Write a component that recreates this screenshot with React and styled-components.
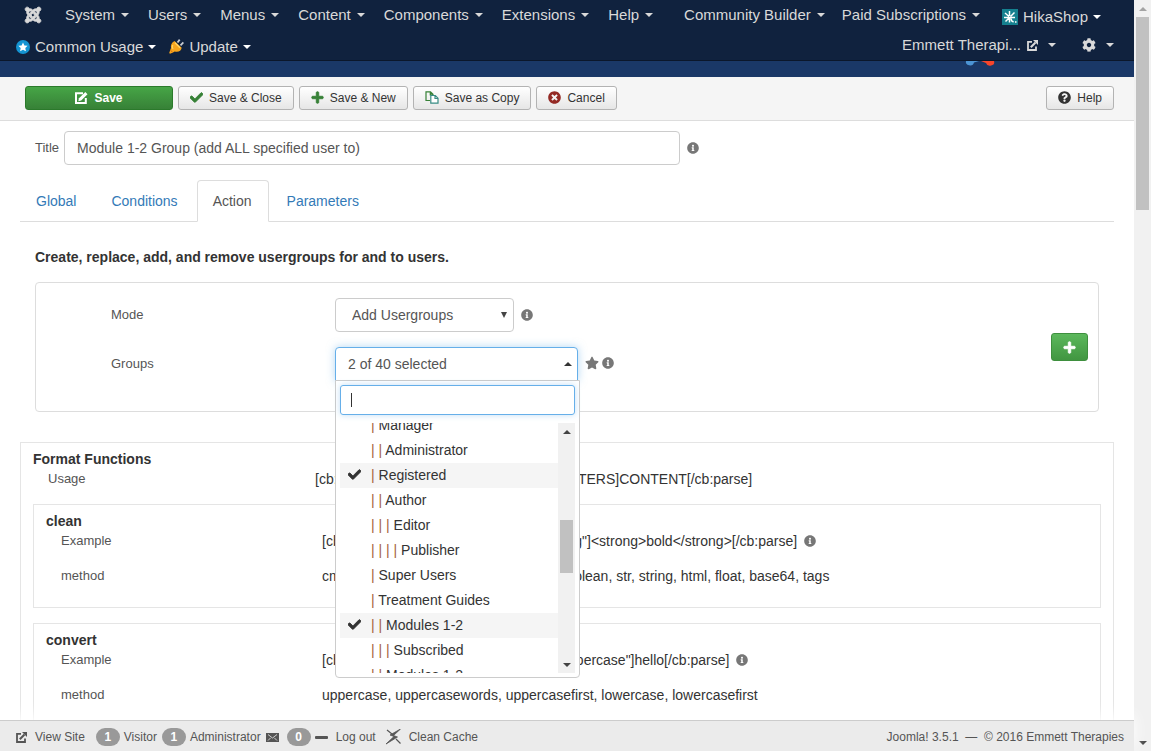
import { useLayoutEffect, useRef } from 'react'
import styled, { createGlobalStyle, css } from 'styled-components'
import { FaCheck, FaCog, FaInfoCircle, FaJoomla, FaPlus, FaQuestionCircle, FaStar, FaTimesCircle } from 'react-icons/fa'

const GlobalStyle = createGlobalStyle`
  * {
    box-sizing: border-box;
  }
  body {
    margin: 0;
    overflow: hidden;
    background: #fff;
    color: #333;
    font-family: "Liberation Sans", Arial, sans-serif;
    font-size: 14px;
  }
  button, input, select {
    font-family: inherit;
  }
  a {
    text-decoration: none;
  }
  svg {
    flex: none;
    display: block;
  }
`;

const Window = styled.div`
  display: flex;
  height: 100vh;
`;

const Page = styled.div`
  flex: 1;
  min-width: 0;
  display: flex;
  flex-direction: column;
`;

const Navbar = styled.nav`
  flex: none;
  background: #10223e;
  border-bottom: 1px solid #0b172b;
`;

const NavRow = styled.div`
  display: flex;
  align-items: center;
  height: 30px;
  padding: 0 20px 0 24px;
  white-space: nowrap;
`;

const NavRowBottom = styled(NavRow)`
  padding-top: 3px;
  padding-left: 16px;
  gap: 13px;
`;

const NavLink = styled.a`
  display: flex;
  align-items: center;
  gap: ${props => props.$tight ? '5px' : '6px'};
  font-size: 15px;
  line-height: 20px;
  color: #d9d9d9;
`;

const JoomlaLink = styled(NavLink)`
  margin-right: 23px;
`;

const MenuList = styled.div`
  display: flex;
  gap: 19px;
`;

const AddonMenus = styled(MenuList)`
  gap: 17px;
  margin-left: 31px;
`;

const HikaLink = styled(NavLink)`
  margin-left: 22px;
  padding-top: 3px;
`;

const Caret = styled.span`
  width: 8px;
  border: 4px solid transparent;
  border-bottom: 0;
  border-top-color: ${props => props.$bright ? '#fff' : '#d9d9d9'};
  ${props => props.$up && css`
    border-top: 0;
    border-bottom: 4px solid #333;
  `}
`;

const SiteLinks = styled.div`
  display: flex;
  gap: 26px;
  margin-left: auto;
  padding-bottom: 3px;
  ${Caret} {
    margin-left: 4px;
  }
`;

const Header = styled.header`
  flex: none;
  display: flex;
  justify-content: flex-end;
  height: 16px;
  padding-right: 138px;
  background: #1a3867;
`;

const Toolbar = styled.div`
  flex: none;
  display: flex;
  align-items: center;
  gap: 5px;
  height: 44px;
  padding: 0 20px 2px 25px;
  background: #f5f5f5;
  border-bottom: 1px solid #ddd;
`;

const ToolButton = styled.button`
  display: flex;
  align-items: center;
  gap: 6px;
  height: 24px;
  padding: 0 11px;
  font-size: 12px;
  color: #333;
  background: linear-gradient(#fff, #e6e6e6);
  border: 1px solid #b3b3b3;
  border-radius: 3px;
  white-space: nowrap;
`;

const SaveButton = styled(ToolButton)`
  width: 148px;
  justify-content: center;
  font-weight: bold;
  color: #fff;
  background: linear-gradient(#46a546, #378137);
  border-color: #2b7a2b;
`;

const HelpButton = styled(ToolButton)`
  margin-left: auto;
`;

const Content = styled.main`
  flex: 1;
  min-height: 0;
  overflow: hidden;
  padding: 10px 20px 0;
`;

const TitleRow = styled.div`
  display: flex;
  align-items: center;
  gap: 5px;
  padding-left: 15px;
  color: #777;
  svg {
    margin-left: 2px;
  }
`;

const Label = styled.label`
  font-size: 13px;
  line-height: 20px;
  color: #555;
`;

const TitleInput = styled.input`
  width: 616px;
  height: 34px;
  padding: 0 12px;
  font-size: 14px;
  color: #555;
  border: 1px solid #ccc;
  border-radius: 4px;
`;

const Tabs = styled.div`
  display: flex;
  gap: 2px;
  margin-top: 15px;
  border-bottom: 1px solid #ddd;
`;

const Tab = styled.a`
  padding: 10px 16px 10px 15px;
  margin-bottom: -1px;
  line-height: 20px;
  border: 1px solid transparent;
  border-radius: 4px 4px 0 0;
  color: #337ab7;
  ${props => props.$active && css`
    color: #555;
    background: #fff;
    border-color: #ddd;
    border-bottom-color: #fff;
  `}
`;

const Intro = styled.p`
  margin: 25px 15px 15px;
  line-height: 20px;
  font-weight: bold;
`;

const Panel = styled.section`
  display: flex;
  align-items: center;
  justify-content: space-between;
  height: 130px;
  margin: 0 15px;
  padding: 0 10px 0 75px;
  border: 1px solid #ddd;
  border-radius: 4px;
`;

const Fields = styled.div`
  display: flex;
  flex-direction: column;
  gap: 15px;
  padding-bottom: 15px;
`;

const FieldRow = styled.div`
  display: grid;
  grid-template-columns: 224px auto;
  align-items: center;
`;

const Controls = styled.div`
  display: flex;
  align-items: center;
  gap: 7px;
  padding-right: 1px;
  color: #777;
`;

const IconPair = styled.span`
  display: flex;
  align-items: center;
  gap: 3px;
  padding-bottom: 2px;
`;

const SelectBox = styled.div`
  position: relative;
  color: #555;
  &::after {
    content: '';
    position: absolute;
    top: 14px;
    right: 7px;
    border: 3px solid transparent;
    border-top: 6px solid #444;
    border-bottom: 0;
    pointer-events: none;
  }
`;

const Select = styled.select`
  appearance: none;
  width: 179px;
  height: 34px;
  padding: 0 16px;
  font-size: 14px;
  color: #555;
  background: #fff;
  border: 1px solid #ccc;
  border-radius: 4px;
`;

const Dropdown = styled.div`
  position: relative;
`;

const DropdownButton = styled.button`
  display: flex;
  align-items: center;
  justify-content: space-between;
  width: 243px;
  height: 34px;
  padding: 0 5px 0 12px;
  font-size: 14px;
  color: #555;
  background: #fff;
  border: 1px solid #66afe9;
  border-radius: 4px 4px 0 0;
  box-shadow: 0 0 8px rgba(102, 175, 233, 0.5);
`;

const Menu = styled.div`
  position: absolute;
  z-index: 5;
  top: 33px;
  left: 0;
  width: 245px;
  padding: 4px;
  background: #fff;
  border: 1px solid #ccc;
  border-radius: 0 0 4px 4px;
`;

const Search = styled.div`
  display: flex;
  align-items: center;
  height: 30px;
  padding: 0 10px;
  border: 1px solid #66afe9;
  border-radius: 3px;
  box-shadow: 0 0 6px rgba(102, 175, 233, 0.4);
  input {
    flex: 1;
    min-width: 0;
    border: 0;
    outline: 0;
    background: none;
    font-size: 14px;
  }
`;

const TextCursor = styled.span`
  width: 1px;
  height: 14px;
  background: #333;
`;

const ListArea = styled.div`
  display: flex;
  height: 250px;
  margin-top: 8px;
`;

const Options = styled.ul`
  flex: 1;
  margin: 0;
  padding: 0;
  overflow: hidden;
  list-style: none;
`;

const Option = styled.li`
  display: grid;
  grid-template-columns: 23px auto;
  align-items: center;
  height: 25px;
  padding: 0 0 2px 8px;
  color: #333;
  background: ${props => props.$selected ? '#f5f5f5' : '#fff'};
`;

const OptionName = styled.span`
  grid-column: 2;
`;

const Bars = styled.span`
  color: #a4623a;
`;

const Track = styled.div`
  flex: none;
  display: flex;
  flex-direction: column;
  align-items: center;
  width: 17px;
  background: #f1f1f1;
`;

const TrackArrow = styled.span`
  flex: none;
  display: flex;
  align-items: center;
  justify-content: center;
  height: 17px;
`;

const TrackCaret = styled(Caret)`
  ${props => props.$up && css`border-bottom-color: ${props.$faded ? '#a3a3a3' : '#444'};`}
  ${props => !props.$up && css`border-top-color: #444;`}
`;

const Thumb = styled.div`
  width: 13px;
  height: ${props => props.$size};
  margin-top: ${props => props.$from || 0};
  margin-bottom: auto;
  background: #c1c1c1;
`;

const AddButton = styled.button`
  display: flex;
  align-items: center;
  justify-content: center;
  width: 37px;
  height: 28px;
  padding: 0;
  color: #fff;
  background: linear-gradient(#5cb85c, #419641);
  border: 1px solid #3e8f3e;
  border-radius: 3px;
`;

const Fieldset = styled.section`
  border: 1px solid #e5e5e5;
  padding: 6px 12px 0;
`;

const FormatBox = styled(Fieldset)`
  margin-top: 30px;
`;

const FunctionBox = styled(Fieldset)`
  height: 104px;
  margin-bottom: 15px;
`;

const BoxTitle = styled.h4`
  margin: 0;
  font-size: 14px;
  line-height: 20px;
`;

const Row = styled.div`
  display: grid;
  grid-template-columns: ${props => props.$wide ? '267px auto' : '261px auto'};
  padding-left: 15px;
  margin-bottom: 15px;
  line-height: 20px;
`;

const RowValue = styled.div`
  display: flex;
  align-items: center;
  gap: 7px;
  color: #333;
  white-space: nowrap;
  svg {
    color: #777;
  }
`;

const StatusBar = styled.footer`
  flex: none;
  position: relative;
  z-index: 1;
  display: flex;
  align-items: center;
  height: 31px;
  padding: 2px 10px 0 16px;
  font-size: 12px;
  color: #555;
  background: #ebebeb;
  border-top: 1px solid #ccc;
  box-shadow: 0 -5px 15px #fff;
  white-space: nowrap;
`;

const StatusItem = styled.span`
  display: flex;
  align-items: center;
  gap: ${props => props.$gap || '4px'};
  margin-right: ${props => props.$after || '5px'};
`;

const StatusLink = styled(StatusItem).attrs({ as: 'a', href: '#' })`
  color: #555;
`;

const Badge = styled.span`
  width: 24px;
  border-radius: 9px;
  line-height: 18px;
  text-align: center;
  font-weight: bold;
  color: #fff;
  background: #999;
`;

const Version = styled.span`
  margin-left: auto;
`;

const coreMenus = ['System', 'Users', 'Menus', 'Content', 'Components', 'Extensions', 'Help']
const addonMenus = ['Community Builder', 'Paid Subscriptions']

const groups = [
  { name: 'Manager', depth: 1 },
  { name: 'Administrator', depth: 2 },
  { name: 'Registered', depth: 1, selected: true },
  { name: 'Author', depth: 2 },
  { name: 'Editor', depth: 3 },
  { name: 'Publisher', depth: 4 },
  { name: 'Super Users', depth: 1 },
  { name: 'Treatment Guides', depth: 1 },
  { name: 'Modules 1-2', depth: 2, selected: true },
  { name: 'Subscribed', depth: 3 },
  { name: 'Modules 1-2', depth: 2 },
]

const functions = [
  {
    name: 'clean',
    example: '[cb:parse function="clean" method="string"]<strong>bold</strong>[/cb:parse]',
    methods: 'cmd, numeric, unsigned, uint, integer, boolean, str, string, html, float, base64, tags',
  },
  {
    name: 'convert',
    example: '[cb:parse function="convert" method="uppercase"]hello[/cb:parse]',
    methods: 'uppercase, uppercasewords, uppercasefirst, lowercase, lowercasefirst',
  },
]

// the stock glyphs are a little thin at this size
const CheckIcon = props => <FaCheck size={13} stroke="currentColor" strokeWidth={36} {...props} />
const PlusIcon = props => <FaPlus size={13} stroke="currentColor" strokeWidth={36} {...props} />

const StarBadge = () => (
  <svg width="14" height="14" viewBox="0 0 14 14">
    <circle cx="7" cy="7" r="7" fill="#1494d2" />
    <path d="M7 2.4l1.4 3 3.2.4-2.3 2.2.6 3.3L7 9.700l-2.900 1.600.6-3.300-2.300-2.200 3.200-.4z" fill="#fff" />
  </svg>
)

const PlugIcon = () => (
  <svg width="15" height="15" viewBox="0 0 15 15">
    <path d="M8.500 3.500L10.700.6M11.500 6.300l2.900-3" stroke="#c9ccd1" strokeWidth="1.800" />
    <path d="M5.500 2l7.200 6.800c-.3 2.900-3.400 4.900-7 3.700L4 13.500 1 14.700l-.8-.8 1-3 .8-2C1.400 6.500 2.700 3.500 5.500 2z" fill="#f7a51c" />
    <path d="M6 3.800l5 4.900M3.800 6c-.8 1.500-.6 3 .2 4" stroke="#ffd66b" strokeWidth="1.200" fill="none" />
    <path d="M1.500 11.500l2 1.500" stroke="#d56a12" />
  </svg>
)

const HikaIcon = () => (
  <svg width="16" height="16" viewBox="0 0 16 16">
    <path d="M0 0h16v16H0z" fill="#15808f" />
    <path d="M7.500 2v5M3 4l4 3.500M12.500 3.500L8.500 7.500M2 8.500h11M7 9L3.500 12.500M7.500 8.500v5M9 9.500c.2 2.200 1 3.200 2.700 3.200M13 13h1.500" stroke="#fff" strokeWidth="1.500" fill="none" />
  </svg>
)

const ExternalIcon = ({ size = 11 }) => (
  <svg width={size} height={size} viewBox="0 0 11 11" fill="none" stroke="currentColor">
    <path d="M5 1.800H1v8.200h8V6.500" strokeWidth="1.800" />
    <path d="M3.800 7.200L8.500 2.500" strokeWidth="2" />
    <path d="M6 0h5v5z" fill="currentColor" stroke="none" />
  </svg>
)

const EditIcon = () => (
  <svg width="13" height="12" viewBox="0 0 13 12">
    <path d="M8 1.200H1v9.800h9.800V6" fill="none" stroke="#fff" strokeWidth="2" />
    <path d="M4 6.300L10.300 0l2.200 2.200L6.200 8.500 3.300 9.200z" fill="#fff" />
  </svg>
)

const CopyIcon = () => (
  <svg width="14" height="13" viewBox="0 0 14 13" strokeWidth="1.200">
    <path d="M5 9.500H1V.8h4.500L8 3.300V5M5.300.8v3H8" fill="none" stroke="#378137" />
    <path d="M5.800 4.500h4.500l2.700 2.700v5H5.800zM10 4.500v3h3" fill="#fff" stroke="#378b83" />
  </svg>
)

const EnvelopeIcon = () => (
  <svg width="13" height="9" viewBox="0 0 13 9">
    <path d="M0 0h13v9H0z" fill="#555" />
    <path d="M2 1.500L6.500 5 11 1.500M2 7.500l2.700-2.700M11 7.500L8.300 4.800" fill="none" stroke="#ebebeb" strokeWidth=".8" />
  </svg>
)

const MinusIcon = () => (
  <svg width="13" height="3" viewBox="0 0 13 3">
    <rect width="13" height="3" rx="1" fill="#555" />
  </svg>
)

const CleanIcon = () => (
  <svg width="16" height="16" viewBox="0 0 16 16">
    <path d="M14.500 0L4 6l4 1.500L0 15l11.500-7-4-1.500z" fill="#555" stroke="#555" strokeWidth=".8" />
    <path d="M1 1l5 4M10 10l4.500 4.500" stroke="#555" strokeWidth="1.200" />
  </svg>
)

const LogoMark = () => (
  <svg width="31" height="5" viewBox="0 0 31 5">
    <path d="M1 0h13L9 1.500A4 3.500 0 0 1 1 0z" fill="#4c94d4" />
    <path d="M16 0h13a4 3.500 0 0 1-8 2z" fill="#f8452a" />
  </svg>
)

const MenuLink = ({ children }) => (
  <NavLink href="#">{children}<Caret /></NavLink>
)

const ScrollTrack = ({ from, size, faded }) => (
  <Track>
    <TrackArrow><TrackCaret $up $faded={faded} /></TrackArrow>
    <Thumb $from={from} $size={size} />
    <TrackArrow><TrackCaret /></TrackArrow>
  </Track>
)

const GroupPicker = () => {
  const list = useRef(null)

  useLayoutEffect(() => {
    list.current.scrollTop = 10
  }, [])

  return (
    <Dropdown>
      <DropdownButton id="groups" type="button" aria-expanded="true">
        2 of 40 selected
        <Caret $up />
      </DropdownButton>
      <Menu>
        <Search>
          <TextCursor />
          <input type="text" aria-label="Search groups" />
        </Search>
        <ListArea>
          <Options ref={list}>
            {groups.map((group, i) => (
              <Option key={i} $selected={group.selected}>
                {group.selected && <CheckIcon />}
                <OptionName><Bars>{'| '.repeat(group.depth)}</Bars>{group.name}</OptionName>
              </Option>
            ))}
          </Options>
          <ScrollTrack from="80px" size="53px" />
        </ListArea>
      </Menu>
    </Dropdown>
  )
}

export default function App() {
  return (
    <Window>
      <GlobalStyle />
      <Page>
        <Navbar>
          <NavRow>
            <JoomlaLink href="#" aria-label="Joomla">
              <FaJoomla size={18} stroke="currentColor" strokeWidth={24} />
            </JoomlaLink>
            <MenuList>
              {coreMenus.map(name => <MenuLink key={name}>{name}</MenuLink>)}
            </MenuList>
            <AddonMenus>
              {addonMenus.map(name => <MenuLink key={name}>{name}</MenuLink>)}
            </AddonMenus>
            <HikaLink href="#" $tight><HikaIcon />HikaShop<Caret $bright /></HikaLink>
          </NavRow>
          <NavRowBottom>
            <NavLink href="#" $tight><StarBadge />Common Usage<Caret $bright /></NavLink>
            <NavLink href="#" $tight><PlugIcon />Update<Caret $bright /></NavLink>
            <SiteLinks>
              <NavLink href="#">Emmett Therapi... <ExternalIcon /> <Caret /></NavLink>
              <NavLink href="#" aria-label="Settings"><FaCog size={14} /> <Caret /></NavLink>
            </SiteLinks>
          </NavRowBottom>
        </Navbar>
        <Header><LogoMark /></Header>

        <Toolbar>
          <SaveButton type="button"><EditIcon />Save</SaveButton>
          <ToolButton type="button"><CheckIcon color="#378137" />Save &amp; Close</ToolButton>
          <ToolButton type="button"><PlusIcon color="#378137" />Save &amp; New</ToolButton>
          <ToolButton type="button"><CopyIcon />Save as Copy</ToolButton>
          <ToolButton type="button"><FaTimesCircle size={13} color="#942a25" />Cancel</ToolButton>
          <HelpButton type="button"><FaQuestionCircle size={13} />Help</HelpButton>
        </Toolbar>

        <Content>
          <TitleRow>
            <Label htmlFor="title">Title</Label>
            <TitleInput id="title" type="text" defaultValue="Module 1-2 Group (add ALL specified user to)" />
            <FaInfoCircle size={12} />
          </TitleRow>

          <Tabs>
            <Tab href="#">Global</Tab>
            <Tab href="#">Conditions</Tab>
            <Tab href="#" $active>Action</Tab>
            <Tab href="#">Parameters</Tab>
          </Tabs>

          <Intro>Create, replace, add, and remove usergroups for and to users.</Intro>

          <Panel>
            <Fields>
              <FieldRow>
                <Label htmlFor="mode">Mode</Label>
                <Controls>
                  <SelectBox>
                    <Select id="mode"><option>Add Usergroups</option></Select>
                  </SelectBox>
                  <FaInfoCircle size={12} />
                </Controls>
              </FieldRow>
              <FieldRow>
                <Label htmlFor="groups">Groups</Label>
                <Controls>
                  <GroupPicker />
                  <IconPair><FaStar size={14} /><FaInfoCircle size={12} /></IconPair>
                </Controls>
              </FieldRow>
            </Fields>
            <AddButton type="button" aria-label="Add"><PlusIcon /></AddButton>
          </Panel>

          <FormatBox>
            <BoxTitle>Format Functions</BoxTitle>
            <Row $wide>
              <Label as="span">Usage</Label>
              <RowValue>[cb:parse function="FUNCTION" PARAMETERS]CONTENT[/cb:parse]</RowValue>
            </Row>
            {functions.map(fn => (
              <FunctionBox key={fn.name}>
                <BoxTitle>{fn.name}</BoxTitle>
                <Row>
                  <Label as="span">Example</Label>
                  <RowValue>{fn.example}<FaInfoCircle size={12} /></RowValue>
                </Row>
                <Row>
                  <Label as="span">method</Label>
                  <RowValue>{fn.methods}</RowValue>
                </Row>
              </FunctionBox>
            ))}
          </FormatBox>
        </Content>

        <StatusBar>
          <StatusLink $gap="8px" $after="11px"><ExternalIcon />View Site</StatusLink>
          <StatusItem><Badge>1</Badge>Visitor</StatusItem>
          <StatusItem><Badge>1</Badge>Administrator</StatusItem>
          <StatusLink $gap="8px" $after="4px"><EnvelopeIcon /><Badge>0</Badge></StatusLink>
          <StatusLink $gap="8px" $after="10px"><MinusIcon />Log out</StatusLink>
          <StatusLink $gap="7px"><CleanIcon />Clean Cache</StatusLink>
          <Version>Joomla! 3.5.1 &nbsp;—&nbsp; © 2016 Emmett Therapies</Version>
        </StatusBar>
      </Page>
      <ScrollTrack size="193px" faded />
    </Window>
  )
}
